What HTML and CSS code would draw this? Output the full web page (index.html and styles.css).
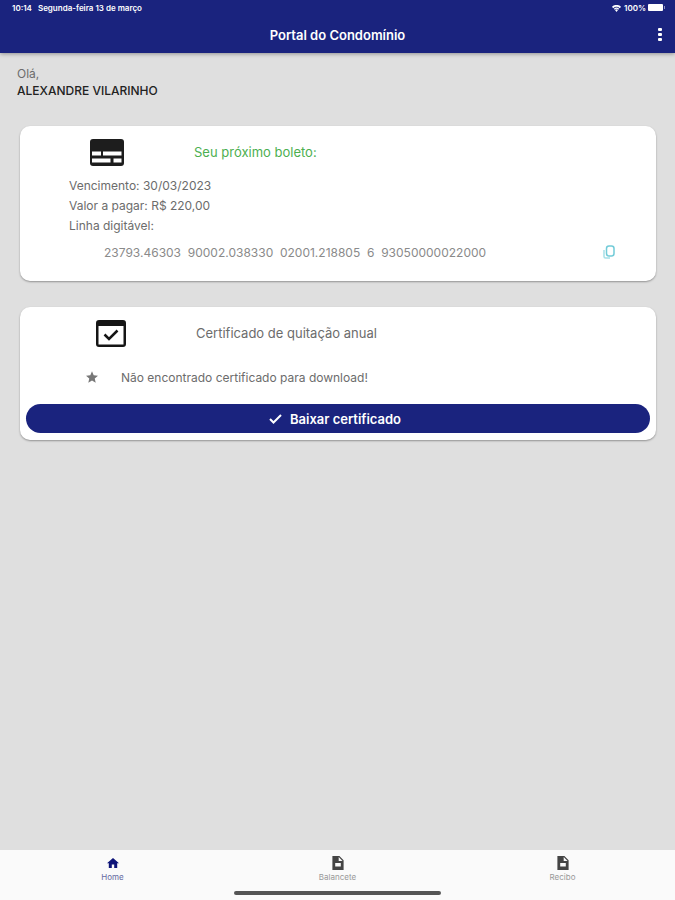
FILE: index.html
```html
<!DOCTYPE html>
<html lang="pt-BR">
<head>
    <meta charset="UTF-8">
    <meta name="viewport" content="width=device-width, initial-scale=1.0">
    <title>Portal do Condomínio</title>
    <link rel="stylesheet" href="styles.css">
</head>
<body>
    <header class="header">
        <div class="status-bar">
            <span>10:14</span>
            <span class="date">Segunda-feira 13 de março</span>
            <svg class="wifi" viewBox="0 0 24 18"><path d="M12 18l4-5a6 6 0 0 0-8 0zM5 9.500l2 2.500a8 8 0 0 1 10 0l2-2.500a11 11 0 0 0-14 0zM0 4l3 4a14 14 0 0 1 18 0l3-4a18 18 0 0 0-24 0z"/></svg>
            <span>100%</span>
            <svg class="battery" viewBox="0 0 17 8"><rect width="15" height="7" y="0" rx="1"/><rect x="16" y="2" width="1" height="3" opacity=".5"/></svg>
        </div>
        <div class="toolbar">
            <h1>Portal do Condomínio</h1>
            <button class="menu-button" type="button" aria-label="Menu">
                <svg viewBox="0 0 4 14"><rect width="4" height="3" rx="1"/><rect y="5" width="4" height="3" rx="1"/><rect y="10" width="4" height="3" rx="1"/></svg>
            </button>
        </div>
    </header>

    <main class="content">
        <div class="greeting">
            <p>Olá,</p>
            <p class="name">ALEXANDRE VILARINHO</p>
        </div>

        <section class="card">
            <div class="card-header">
                <div class="card-icon">
                    <svg class="boleto-icon" viewBox="0 0 34 27">
                        <rect width="34" height="27" rx="3" fill="#1d1d1d"/>
                        <path d="M2 12.500h9v4H2zM13 12.500h18.500v4H13zM2 19.500h18.500v4H2zM23.500 19.500h8v4h-8z" fill="#fff"/>
                    </svg>
                </div>
                <h2 class="green">Seu próximo boleto:</h2>
            </div>
            <div class="details">
                <p>Vencimento: 30/03/2023</p>
                <p>Valor a pagar: R$ 220,00</p>
                <p>Linha digitável:</p>
            </div>
            <div class="code-row">
                <span class="code">23793.46303  90002.038330  02001.218805  6  93050000022000</span>
                <button class="copy-button" type="button" aria-label="Copiar linha digitável">
                    <svg viewBox="0 0 12 14"><rect x="3.500" y="1" width="7.500" height="10" rx="2.500"/><path class="back" d="M1 5v6.500q0 1.500 1.500 1.500h4.500"/></svg>
                </button>
            </div>
        </section>

        <section class="card">
            <div class="card-header">
                <div class="card-icon certificate">
                    <svg class="certificate-icon" viewBox="0 0 30 27">
                        <path d="M3 0h24a3 3 0 0 1 3 3v21a3 3 0 0 1-3 3H3a3 3 0 0 1-3-3V3a3 3 0 0 1 3-3zM2.500 6v18.500h25V6z" fill="#151515" fill-rule="evenodd"/>
                        <path d="M8.500 14.500l4.500 4.500 8.500-8.500" fill="none" stroke="#151515" stroke-width="2.500"/>
                    </svg>
                </div>
                <h2>Certificado de quitação anual</h2>
            </div>
            <div class="notice">
                <svg class="star" viewBox="2 2 20 19"><path d="M12 17.270L18.180 21l-1.640-7.030L22 9.240l-7.190-.61L12 2 9.190 8.630 2 9.240l5.460 4.730L5.820 21z"/></svg>
                <p>Não encontrado certificado para download!</p>
            </div>
            <button class="download-button" type="button">
                <svg viewBox="0 0 13 10"><path d="M1 5l3.500 3.500L12 1"/></svg>
                Baixar certificado
            </button>
        </section>
    </main>

    <footer class="footer">
        <nav class="tabs">
            <a href="#" class="tab active">
                <svg viewBox="2 3 20 17"><path d="M10 20v-6h4v6h5v-8h3L12 3 2 12h3v8z"/></svg>
                Home
            </a>
            <a href="#" class="tab">
                <svg viewBox="4 2 16 20"><path fill-rule="evenodd" d="M4 2h10l6 6v14H4zM13 3.500V9h5.500zM8 12v5h8v-5z"/></svg>
                Balancete
            </a>
            <a href="#" class="tab">
                <svg viewBox="4 2 16 20"><path fill-rule="evenodd" d="M4 2h10l6 6v14H4zM13 3.500V9h5.500zM8 12v5h8v-5z"/></svg>
                Recibo
            </a>
        </nav>
        <div class="home-indicator"></div>
    </footer>
</body>
</html>
```
FILE: styles.css
```css
* {
    box-sizing: border-box;
}
body {
    font-family: Inter, "Liberation Sans", sans-serif;
    display: flex;
    flex-direction: column;
    min-height: 100vh;
    margin: 0;
    background-color: #dfdfdf;
    color: #6c6c6c;
    font-size: 12px;
}
h1, h2, p {
    margin: 0;
    font-weight: normal;
}
svg {
    display: block;
    flex: none;
}
button {
    font-family: inherit;
    border: none;
    padding: 0;
    background: none;
    cursor: pointer;
}
.header {
    background-color: #1a237e;
    color: white;
    box-shadow: 0 1px 4px rgba(0,0,0,0.35);
}
.status-bar {
    display: flex;
    align-items: center;
    height: 16px;
    padding: 0 10px 0 12px;
    font-size: 8px;
    font-weight: 600;
}
.status-bar svg {
    fill: white;
}
.date {
    margin-left: 6px;
    margin-right: auto;
}
.wifi {
    width: 9px;
    height: 7px;
    margin-right: 3px;
}
.battery {
    width: 17px;
    height: 8px;
    margin-left: 2px;
}
.toolbar {
    display: grid;
    grid-template-columns: 1fr auto 1fr;
    align-items: center;
    height: 37px;
    padding: 0 13px;
}
.toolbar h1 {
    grid-column: 2;
    font-size: 13px;
    font-weight: 600;
}
.menu-button {
    justify-self: end;
}
.menu-button svg {
    width: 4px;
    height: 14px;
    fill: white;
}
.content {
    flex: 1;
    padding: 12px 19px 24px 20px;
}
.greeting {
    margin: 0 0 27px -3px;
    line-height: 17px;
}
.greeting .name {
    color: #222;
    font-weight: 500;
}
.card {
    padding: 5px 6px 7px;
    margin-bottom: 26px;
    background-color: white;
    border-radius: 10px;
    box-shadow: 0 1px 2px rgba(0,0,0,0.35);
}
.card-header {
    display: flex;
    align-items: center;
    height: 42px;
}
.card-header h2 {
    font-size: 13px;
}
.card-header .green {
    color: #4caf50;
}
.card-icon {
    width: 168px;
    padding-left: 64px;
}
.card-icon.certificate {
    width: 170px;
    padding-left: 70px;
}
.boleto-icon {
    width: 34px;
    height: 27px;
}
.certificate-icon {
    width: 30px;
    height: 27px;
}
.details {
    padding: 3px 0 0 43px;
    line-height: 20px;
}
.code-row {
    display: flex;
    align-items: center;
    justify-content: space-between;
    height: 32px;
    margin-bottom: 6px;
    padding: 0 35px 0 78px;
    color: #8a8a8a;
}
.code {
    white-space: pre;
}
.copy-button svg {
    width: 12px;
    height: 14px;
    fill: none;
    stroke: #72cbd8;
    stroke-width: 1.5;
}
.copy-button .back {
    stroke: #a6e0e8;
}
.notice {
    display: flex;
    align-items: center;
    gap: 23px;
    height: 46px;
    padding-left: 60px;
}
.star {
    width: 12px;
    height: 12px;
    fill: #777;
}
.download-button {
    display: flex;
    align-items: center;
    justify-content: center;
    gap: 8px;
    width: 100%;
    height: 29px;
    margin-top: 4px;
    padding-right: 6px;
    border-radius: 15px;
    background-color: #1a237e;
    color: white;
    font-size: 13px;
    font-weight: 600;
}
.download-button svg {
    width: 13px;
    height: 10px;
    fill: none;
    stroke: white;
    stroke-width: 2;
}
.footer {
    height: 50px;
    background-color: #fafafa;
}
.tabs {
    display: flex;
    height: 41px;
}
.tab {
    flex: 1;
    display: flex;
    flex-direction: column;
    align-items: center;
    gap: 2px;
    padding-top: 6px;
    color: #999;
    font-size: 8px;
    line-height: 10px;
    text-decoration: none;
}
.tab svg {
    width: 12px;
    height: 14px;
    fill: #444;
}
.tab.active {
    color: #6468a0;
}
.tab.active svg {
    fill: #0e1478;
}
.home-indicator {
    width: 207px;
    height: 4px;
    margin: 0 auto;
    border-radius: 2px;
    background-color: #555;
}
```
